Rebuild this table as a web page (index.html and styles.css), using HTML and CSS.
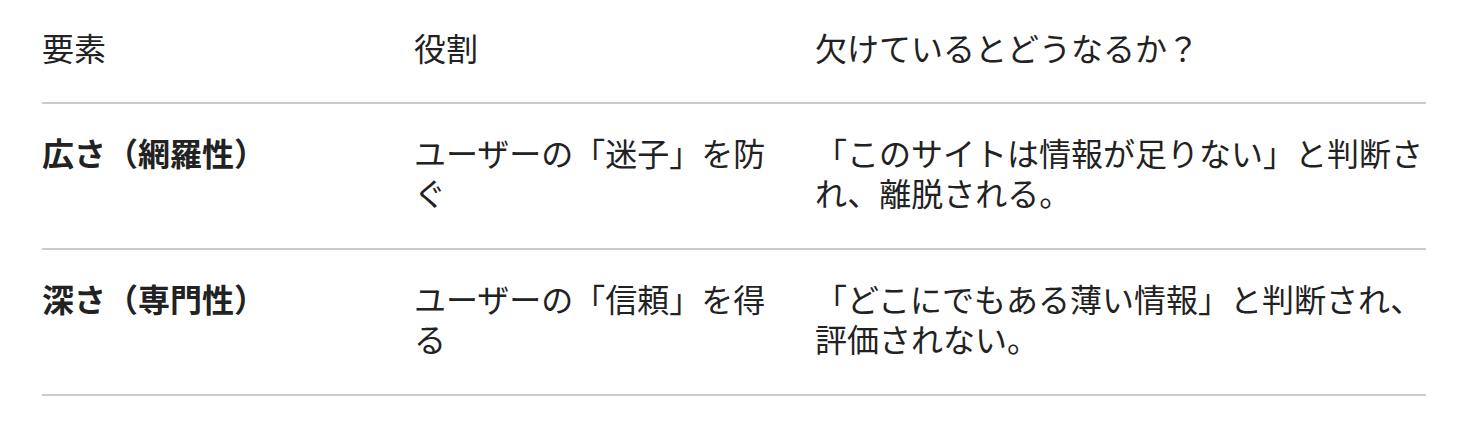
FILE: index.html
```html
<!DOCTYPE html>
<html lang="ja">
<head>
<meta charset="utf-8">
<title>要素と役割</title>
<link rel="stylesheet" href="styles.css">
</head>
<body>
<div class="wrap">
  <table class="grid">
    <colgroup>
      <col class="c1">
      <col class="c2">
      <col class="c3">
    </colgroup>
    <thead>
      <tr>
        <th class="head">要素</th>
        <th class="head">役割</th>
        <th class="head">欠けているとどうなるか？</th>
      </tr>
    </thead>
    <tbody>
      <tr>
        <td class="cell key">広さ（網羅性）</td>
        <td class="cell">ユーザーの「迷子」を防ぐ</td>
        <td class="cell">「このサイトは情報が足りない」と判断され、離脱される。</td>
      </tr>
      <tr>
        <td class="cell key">深さ（専門性）</td>
        <td class="cell">ユーザーの「信頼」を得る</td>
        <td class="cell">「どこにでもある薄い情報」と判断され、評価されない。</td>
      </tr>
    </tbody>
  </table>
</div>
</body>
</html>
```

FILE: styles.css
```css
html, body {
  margin: 0;
  padding: 0;
  background: #ffffff;
}

body {
  color: #222222;
  font-family: "Noto Sans CJK JP", "Noto Sans", sans-serif;
}

.wrap {
  padding: 0 42px;
}

.grid {
  width: 1384px;
  border-collapse: collapse;
  table-layout: fixed;
  font-size: 32px;
  line-height: 40px;
}

.c1 { width: 372px; }
.c2 { width: 401px; }
.c3 { width: 611px; }

.head,
.cell {
  text-align: left;
  vertical-align: top;
  border-bottom: 2px solid #cbcbcb;
  padding: 28px 24px 36px 0;
}

.head {
  font-weight: 400;
  padding-top: 27px;
  padding-bottom: 35px;
}

.key {
  font-weight: 700;
}

.head:last-child,
.cell:last-child {
  padding-right: 0;
}
```
